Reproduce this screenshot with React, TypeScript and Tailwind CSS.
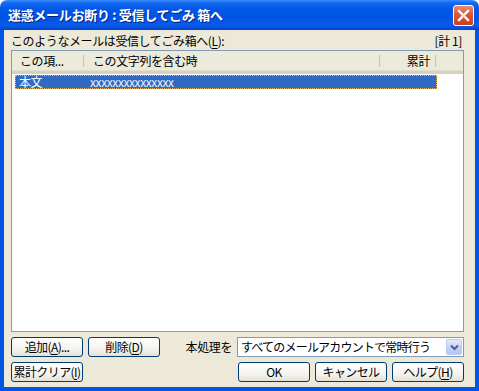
const font = "font-['Noto_Sans_CJK_JP','Noto_Sans',sans-serif]";

function XpButton({ children, className = "" }: { children: React.ReactNode; className?: string }) {
    return (
        <div
            className={`flex h-[20px] w-[72px] items-center justify-center whitespace-nowrap rounded-[3px] border border-[#003C74] bg-[linear-gradient(180deg,#FFFFFF_0%,#F4F3EE_60%,#E3E1D6_100%)] text-[12px] leading-none tracking-[-0.6px] text-black ${className}`}
        >
            {children}
        </div>
    );
}

function U({ children }: { children: React.ReactNode }) {
    return <span className="underline underline-offset-[2px]">{children}</span>;
}

export default function App() {
    return (
        <div className={`flex h-[391px] w-[479px] flex-col ${font}`}>
            {/* Title bar */}
            <div className="flex h-[30px] shrink-0 items-center rounded-t-[7px] bg-[linear-gradient(180deg,#3A8CFF_0%,#1468F0_10%,#0058E8_30%,#0054E3_60%,#0A5CEC_85%,#0043C6_100%)] pl-[8px] pr-[5px]">
                <span className="whitespace-pre text-[13px] font-bold tracking-[-0.3px] text-white [text-shadow:1px_1px_0_#0A1E80]">
                    迷惑メールお断り : 受信してごみ 箱へ
                </span>
                <div className="ml-auto flex h-[21px] w-[21px] items-center justify-center rounded-[3px] border border-white bg-[linear-gradient(180deg,#E88C6C_0%,#D9573A_45%,#C4401F_100%)]">
                    <svg width="13" height="13" viewBox="0 0 13 13">
                        <path d="M2 2 L11 11 M11 2 L2 11" stroke="white" strokeWidth="2.4" strokeLinecap="square" />
                    </svg>
                </div>
            </div>

            {/* Client area */}
            <div className="flex flex-1 flex-col border-x-4 border-b-4 border-[#0055E5] bg-[#ECE9D8] pl-[7px] pr-[11px] pt-[4px] pb-[5px] text-[12px] tracking-[-0.4px] text-black">
                <div className="flex h-[16px] shrink-0 items-start justify-between leading-[14px]">
                    <span>このようなメールは受信してごみ箱へ(<U>L</U>):</span>
                    <span className="mr-[2px] whitespace-pre">[計 1]</span>
                </div>

                {/* List view */}
                <div className="flex h-[282px] flex-col border border-[#7F9DB9] bg-white">
                    <div className="flex h-[23px] shrink-0 border-b-[3px] border-[#D6D2C2] bg-[#EBEADB] shadow-[inset_0_-1px_0_#E2DECD]">
                        <div className="flex w-[71px] items-center pl-[8px]">この項...</div>
                        <div className="my-[4px] w-px bg-[#C7C5B2]" />
                        <div className="flex w-[295px] items-center pl-[9px]">この文字列を含む時</div>
                        <div className="my-[4px] w-px bg-[#C7C5B2]" />
                        <div className="flex w-[55px] items-center justify-end pr-[5px]">累計</div>
                        <div className="my-[4px] w-px bg-[#C7C5B2]" />
                    </div>
                    <div className="ml-[3px] mt-px flex h-[14px] w-[422px] items-center border border-dotted border-[#E0B060] bg-[#316AC5] leading-none text-white">
                        <span className="w-[74px] pl-[3px]">本文</span>
                        <span className="text-[12px] tracking-[-0.4px] text-[#E6ECF8]">xxxxxxxxxxxxxxx</span>
                    </div>
                </div>

                {/* Bottom controls */}
                <div className="mt-[5px] flex items-center">
                    <XpButton>
                        追加(<U>A</U>)...
                    </XpButton>
                    <XpButton className="ml-[5px]">
                        削除(<U>D</U>)
                    </XpButton>
                    <span className="ml-auto mr-[5px]">本処理を</span>
                    <div className="flex h-[20px] w-[227px] items-center border border-[#7F9DB9] bg-white">
                        <span className="flex-1 overflow-hidden whitespace-nowrap pl-[3px] tracking-[-0.8px]">
                            すべてのメールアカウントで常時行う
                        </span>
                        <div className="mr-px flex h-[16px] w-[16px] shrink-0 items-center justify-center rounded-[2px] border border-[#B9CBF3] bg-[linear-gradient(180deg,#E2EAFE_0%,#C3D3FD_50%,#B2C7F8_100%)]">
                            <svg width="9" height="7" viewBox="0 0 9 7">
                                <path d="M1 1.5 L4.5 5 L8 1.5" stroke="#4D6185" strokeWidth="2" fill="none" />
                            </svg>
                        </div>
                    </div>
                </div>
                <div className="mt-[5px] flex items-center">
                    <XpButton>
                        累計クリア(<U>I</U>)
                    </XpButton>
                    <XpButton className="ml-auto">OK</XpButton>
                    <XpButton className="ml-[5px]">キャンセル</XpButton>
                    <XpButton className="ml-[5px]">
                        ヘルプ(<U>H</U>)
                    </XpButton>
                </div>
            </div>
        </div>
    );
}
